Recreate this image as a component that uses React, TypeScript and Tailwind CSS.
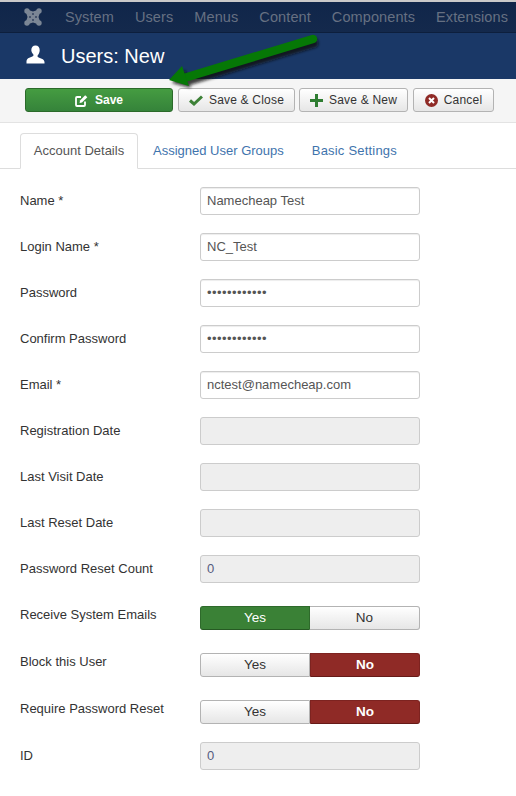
import React from "react";

const Field = ({ label, value, disabled, pw }: { label: string; value?: string; disabled?: boolean; pw?: boolean }) => (
  <div className="flex items-start h-[46px]">
    <div className="w-[180px] pt-[5px] text-[13px] leading-[18px] text-[#333]">{label}</div>
    <div
      className={`w-[220px] h-[28px] rounded-[3px] border border-[#ccc] px-[6px] flex items-center text-[13px] ${
        disabled ? "bg-[#eee] text-[#555b80]" : "bg-white text-[#555] shadow-[inset_0_1px_1px_rgba(0,0,0,0.075)]"
      } ${pw ? "tracking-[0.45px] text-[#445]" : ""}`}
    >
      {value}
    </div>
  </div>
);

const Toggle = ({ label, active }: { label: string; active: "yes" | "no" }) => (
  <div className="flex items-start h-[47px]">
    <div className="w-[180px] text-[13px] leading-[18px] text-[#333]">{label}</div>
    <div className="w-[220px] h-[24px] flex text-[13.5px] leading-none">
      <div
        className={
          active === "yes"
            ? "w-[110px] pb-[1px] rounded-l-[3px] bg-[#3a8136] border border-[#2e6a2b] border-b-[#265a23] text-white flex items-center justify-center"
            : "w-[110px] pb-[1px] rounded-l-[3px] bg-gradient-to-b from-white to-[#e6e6e6] border border-[#b3b3b3] text-[#333] flex items-center justify-center"
        }
      >
        Yes
      </div>
      <div
        className={
          active === "no"
            ? "w-[110px] pb-[1px] rounded-r-[3px] bg-[#8f2a26] border border-[#7d2320] border-b-[#661a17] text-white font-bold flex items-center justify-center"
            : "w-[110px] pb-[1px] rounded-r-[3px] bg-gradient-to-b from-white to-[#e6e6e6] border border-[#b3b3b3] border-l-0 text-[#333] flex items-center justify-center"
        }
      >
        No
      </div>
    </div>
  </div>
);

const ToolBtn = ({ children, width, ml }: { children: React.ReactNode; width: string; ml: string }) => (
  <div
    className={`${width} ${ml} h-[24px] rounded-[3px] border border-[#b3b3b3] bg-gradient-to-b from-white to-[#e6e6e6] flex items-center justify-center gap-[6px] text-[12px] tracking-[0.2px] text-[#333]`}
  >
    {children}
  </div>
);

const Joomla = () => (
  <svg width="18" height="18" viewBox="0 0 18 18" className="shrink-0">
    <path fill="#7b8695" d="M3 1.5 9 3.5l6-2 1.5 1.5-2 6 2 6-1.5 1.5-6-2-6 2L1.5 15l2-6-2-6z" />
    <g fill="#7b8695">
      <circle cx="3" cy="3" r="2.7" />
      <circle cx="15" cy="3" r="2.7" />
      <circle cx="3" cy="15" r="2.7" />
      <circle cx="15" cy="15" r="2.7" />
    </g>
    <g fill="#33425f">
      <circle cx="6" cy="9" r="1" />
      <circle cx="12" cy="9" r="1" />
      <circle cx="9" cy="6" r="1" />
      <circle cx="9" cy="12" r="1" />
    </g>
  </svg>
);

export default function App() {
  return (
    <div className="relative w-[516px] h-[796px] overflow-hidden bg-white font-['Liberation_Sans',Arial,sans-serif]">
      <div className="h-[2px] bg-[#c9c9c9]" />
      <div className="h-[31px] bg-gradient-to-b from-[#10264a] to-[#14294c] border-b border-[#0d1f3d] flex items-center pl-[24px] text-[14.5px] tracking-[0.1px] text-[#667082]">
        <Joomla />
        <div className="ml-[23px] pt-[1px] flex gap-[21px] whitespace-nowrap">
          <span>System</span>
          <span>Users</span>
          <span>Menus</span>
          <span>Content</span>
          <span>Components</span>
          <span>Extensions</span>
        </div>
      </div>
      <div className="h-[46px] bg-[#1a3867] flex items-center pl-[26px] text-white">
        <svg width="19" height="20" viewBox="0 0 19 20" className="mb-[3px]">
          <path
            fill="#fff"
            d="M9.5 0.5c2.6 0 4.2 2 4.2 4.8 0 2.2-1 4.2-2.1 5.1v1.4c0.6 0.8 2.4 1.2 4.1 2 1.6 0.7 2.6 1.6 2.8 3.2v1.5H0.5V16c0.2-1.6 1.2-2.5 2.8-3.2 1.7-0.8 3.5-1.2 4.1-2V9.4C6.3 8.5 5.3 6.5 5.3 5.3c0-2.8 1.6-4.8 4.2-4.8z"
          />
        </svg>
        <span className="ml-[16px] text-[20px] leading-none mb-[1px]">Users: New</span>
      </div>
      <div className="h-[44px] bg-[#f5f5f5] border-b border-[#e3e3e3] flex pt-[9px] pl-[25px]">
        <div className="w-[148px] h-[24px] rounded-[3px] border border-[#2b6a2a] bg-gradient-to-b from-[#459c41] to-[#35833a] flex items-center justify-center gap-[7px] text-[12px] font-bold text-white">
          <svg width="13" height="13" viewBox="0 0 13 13">
            <path fill="none" stroke="#fff" strokeWidth="1.8" d="M10 7.5V11a1 1 0 0 1-1 1H2a1 1 0 0 1-1-1V4a1 1 0 0 1 1-1h4" />
            <path fill="#fff" d="M5 6.5 10.2 1.2 12.3 3.3 7 8.5 4.6 9z" />
          </svg>
          <span>Save</span>
        </div>
        <ToolBtn width="w-[117px]" ml="ml-[5px]">
          <svg width="14" height="11" viewBox="0 0 14 11">
            <path fill="none" stroke="#3d8137" strokeWidth="3" d="M1 5.5 5 9 13 1.5" />
          </svg>
          <span>Save &amp; Close</span>
        </ToolBtn>
        <ToolBtn width="w-[109px]" ml="ml-[4px]">
          <svg width="13" height="13" viewBox="0 0 13 13">
            <path fill="#2f7d32" d="M5 0h3v5h5v3H8v5H5V8H0V5h5z" />
          </svg>
          <span>Save &amp; New</span>
        </ToolBtn>
        <ToolBtn width="w-[81px]" ml="ml-[5px]">
          <svg width="13" height="13" viewBox="0 0 13 13">
            <circle cx="6.5" cy="6.5" r="6.5" fill="#8f2a26" />
            <path stroke="#fff" strokeWidth="2" d="M4 4l5 5M9 4l-5 5" />
          </svg>
          <span>Cancel</span>
        </ToolBtn>
      </div>

      <div className="pl-[20px] pt-[10px]">
        <div className="h-[36px] border-b border-[#ddd] -ml-[20px] pl-[20px] flex text-[13px]">
          <div className="h-[36px] w-[118px] border border-[#ddd] border-b-white rounded-t-[4px] bg-white text-[#555] flex items-center justify-center">
            Account Details
          </div>
          <div className="ml-[15px] h-[35px] flex items-center text-[#3f74ad]">Assigned User Groups</div>
          <div className="ml-[28px] h-[35px] flex items-center text-[#3f74ad] tracking-[0.2px]">Basic Settings</div>
        </div>
        <div className="pt-[18px]">
          <Field label="Name *" value="Namecheap Test" />
          <Field label="Login Name *" value="NC_Test" />
          <Field label="Password" value="••••••••••••" pw />
          <Field label="Confirm Password" value="••••••••••••" pw />
          <Field label="Email *" value="nctest@namecheap.com" />
          <Field label="Registration Date" disabled />
          <Field label="Last Visit Date" disabled />
          <Field label="Last Reset Date" disabled />
          <Field label="Password Reset Count" value="0" disabled />
          <div className="mt-[5px]">
            <Toggle label="Receive System Emails" active="yes" />
            <Toggle label="Block this User" active="no" />
            <Toggle label="Require Password Reset" active="no" />
          </div>
          <div className="-mt-[5px]">
            <Field label="ID" value="0" disabled />
          </div>
        </div>
      </div>

      <svg className="absolute left-[160px] top-[30px]" width="175" height="70" viewBox="0 0 175 70">
        <defs>
          <filter id="s" x="-20%" y="-40%" width="140%" height="180%">
            <feGaussianBlur stdDeviation="1.5" />
          </filter>
        </defs>
        <g fill="#111" fillOpacity="0.8" filter="url(#s)" transform="translate(3 3)">
          <path d="M9 50 L22 37 L25 44 L153 5 Q157 9 154 14 L27 52 L28 55 Z" />
        </g>
        <path d="M153 9 L24 48" stroke="#067806" strokeWidth="8.5" strokeLinecap="round" />
        <path d="M9 50 L22 36 L29 56 Z" fill="#067806" />
      </svg>
    </div>
  );
}
